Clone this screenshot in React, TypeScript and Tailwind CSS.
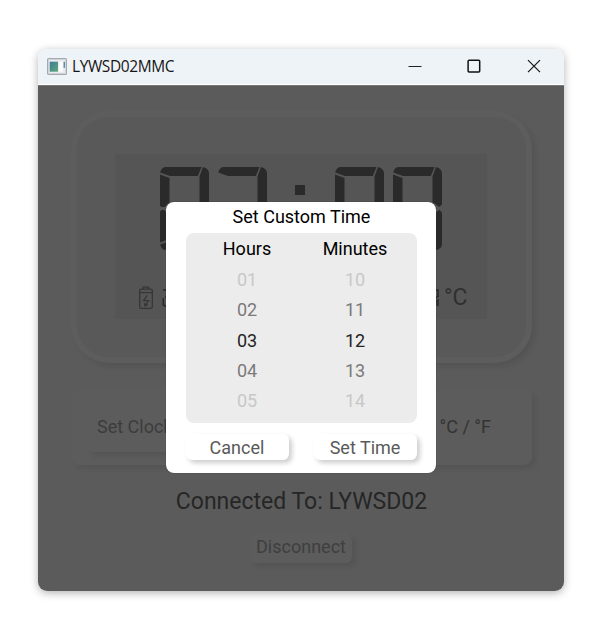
type Segment = 'top' | 'upperLeft' | 'upperRight' | 'lowerLeft' | 'lowerRight' | 'middle' | 'bottom';

const SEGMENTS: Record<Segment, string> = {
  top: 'M0.2 5.6 Q1.5 0 6 0 H41.5 L37.8 9 H10Z',
  upperLeft: 'M0 7.6 L9.5 11 V35 L4.5 40 H1.5 L0 38.5Z',
  upperRight: 'M43 0 Q49 1.5 49 6.5 V37.5 L46.3 40 L39.5 35 V9.5Z',
  middle: 'M5 41.5 L11 37 H38 L44 41.5 L38 46 H11Z',
  lowerLeft: 'M1.5 43 H4 L9.5 48 V72 L0 75.5 V44.5Z',
  lowerRight: 'M46.3 42.8 L49 45.5 V77 Q49 82 43 83 L39.5 74 V48Z',
  bottom: 'M0.2 77.4 L10 74 H37.8 L41.5 83 H6 Q1.5 83 0.2 77.4Z',
};

const ZERO: Segment[] = ['top', 'upperLeft', 'upperRight', 'lowerLeft', 'lowerRight', 'bottom'];
const SEVEN: Segment[] = ['top', 'upperRight', 'lowerRight'];

function Digit({ segments }: { segments: Segment[] }) {
  return (
    <svg className="h-[83px] w-[49px] shrink-0" viewBox="0 0 49 83" fill="#2a2a2a">
      {segments.map((s) => (
        <path key={s} d={SEGMENTS[s]} />
      ))}
    </svg>
  );
}

function Battery() {
  return (
    <svg className="h-[24px] w-[16px] shrink-0" viewBox="0 0 16 24" fill="none" stroke="#363636" strokeWidth="1.3">
      <path d="M5.2 3.2V1.2H10.6V3.2" />
      <rect x="1.7" y="3.2" width="12.6" height="19.2" rx="1.3" />
      <path d="M1.7 6.6H14.3" />
      <path d="M9.2 9.3L5.6 14.7H10.6L7.2 19.3M6.4 17L7 19.8L9.8 18.7" />
    </svg>
  );
}

function AppIcon() {
  return (
    <svg className="h-[17px] w-5 shrink-0" viewBox="0 0 20 17">
      <defs>
        <linearGradient id="pane" x1="0" y1="0" x2="1" y2="1">
          <stop offset="0" stopColor="#3f789a" />
          <stop offset="1" stopColor="#5bab78" />
        </linearGradient>
      </defs>
      <rect x="0.6" y="0.6" width="18.8" height="15.8" rx="1" fill="#e9ebee" stroke="#a4a9b0" strokeWidth="1.2" />
      <rect x="1.6" y="1.6" width="16.8" height="13.8" fill="none" stroke="#ced2d7" strokeWidth="0.7" />
      <rect x="2.7" y="3.7" width="8.3" height="10" fill="url(#pane)" />
      <rect x="12" y="3.7" width="4" height="10" fill="#fafafa" />
      <rect x="16.6" y="3.8" width="1.3" height="6" fill="#4384a4" />
    </svg>
  );
}

function TitleBar() {
  return (
    <header className="flex h-9 shrink-0 items-center border-b border-white bg-[#eef3f8] pb-px pl-[9px]">
      <AppIcon />
      <span className="ml-[5px] font-['Open_Sans',sans-serif] text-[15.5px] leading-5 tracking-[-0.4px] text-[#161616]">
        LYWSD02MMC
      </span>
      <div className="ml-auto flex items-center">
        <svg className="mr-[45px] h-[14px] w-[14px]" viewBox="0 0 14 14" stroke="#222" strokeWidth="1">
          <path d="M0.5 7.5H13.5" />
        </svg>
        <svg className="mr-[46px] h-[14px] w-[14px]" viewBox="0 0 14 14" fill="none" stroke="#111" strokeWidth="1.5">
          <rect x="1.1" y="1.3" width="11.6" height="11.6" rx="1" />
        </svg>
        <svg className="mr-[23px] h-[14px] w-[14px]" viewBox="0 0 14 14" stroke="#151515" strokeWidth="1.2">
          <path d="M1 1.2L13 13.2M13 1.2L1 13.2" />
        </svg>
      </div>
    </header>
  );
}

function Clock() {
  return (
    <section className="h-[252px] w-[461px] shrink-0 rounded-[38px] border-[6px] border-[#5d5d5d] bg-[#595959] pl-[38px] pt-[37px] shadow-[4px_4px_5px_rgba(0,0,0,0.08)]">
      <div className="h-[165px] w-[372px] bg-[#555] pt-[13px]">
        <div className="flex pl-[45px]">
          <Digit segments={ZERO} />
          <div className="ml-[9px]">
            <Digit segments={SEVEN} />
          </div>
          <div className="ml-7 mr-[30px] flex w-[10px] flex-col gap-[27px] pt-[18px]">
            <span className="h-[10px] bg-[#2a2a2a]" />
            <span className="h-[10px] bg-[#2a2a2a]" />
          </div>
          <Digit segments={ZERO} />
          <div className="ml-[9px]">
            <Digit segments={ZERO} />
          </div>
        </div>
        <div className="mt-[35px] flex h-[26px] items-center pl-[23px] text-[#303030]">
          <Battery />
          <svg className="ml-2 h-[20px] w-[12px]" viewBox="0 0 12 20" fill="none" stroke="#292929" strokeWidth="1.5">
            <path d="M1 2H10V8M3 9H10M1.3 10V17L3 18H9" />
          </svg>
          <svg className="ml-[254px] h-[20px] w-[11px]" viewBox="0 0 11 20" fill="none" stroke="#292929" strokeWidth="1.5">
            <path d="M1 2H10V9M1 10H8L10 8M10 11V18M1 17H8V12" />
          </svg>
          <span className="ml-[5px] text-[23px] leading-[26px]">°C</span>
        </div>
      </div>
    </section>
  );
}

function Column({ title, values, className }: { title: string; values: string[]; className: string }) {
  const tones = ['text-[#c8c8c8]', 'text-[#7a7a7a]', 'text-[#242424]', 'text-[#7a7a7a]', 'text-[#c8c8c8]'];
  return (
    <div className={`flex flex-col text-center ${className}`}>
      <div className="h-[31px] leading-[31px] text-black">{title}</div>
      {values.map((v, i) => (
        <div key={v} className={`h-[30.3px] leading-[31px] ${tones[i]}`}>
          {v}
        </div>
      ))}
    </div>
  );
}

function TimeDialog() {
  const button =
    'h-[26px] w-[103px] rounded-[6px] bg-white text-center leading-[27px] text-[#5a5a5a] shadow-[3px_3px_5px_rgba(0,0,0,0.2)]';
  return (
    <div
      role="dialog"
      className="absolute left-32 top-[116px] h-[271px] w-[270px] rounded-lg bg-white px-[19.5px] text-[18px] shadow-[0_0_1px_#222]"
    >
      <h2 className="h-[31px] pl-px text-center leading-[30px] text-black">Set Custom Time</h2>
      <div className="flex h-[190px] rounded-lg bg-[#ececec]">
        <Column title="Hours" values={['01', '02', '03', '04', '05']} className="w-[123px]" />
        <Column title="Minutes" values={['10', '11', '12', '13', '14']} className="w-[93px]" />
      </div>
      <div className="mt-[11px] flex justify-between">
        <button className={button}>Cancel</button>
        <button className={button}>Set Time</button>
      </div>
    </div>
  );
}

export default function App() {
  return (
    <div className="h-[640px] w-[600px] bg-white pl-[38px] pt-[49px] font-[Roboto,sans-serif]">
      <main className="flex h-[542px] w-[526px] flex-col overflow-hidden rounded-[9px] shadow-[0_2px_8px_rgba(0,0,0,0.3)]">
        <TitleBar />
        <div className="relative flex grow flex-col border-t border-[#777] bg-[#5b5b5b] pl-[33px] pt-[25px]">
          <Clock />
          <section className="mt-[26px] flex h-[76px] w-[461px] shrink-0 items-center justify-between rounded-lg bg-[#5c5c5c] pl-4 pr-[41px] text-[18px] shadow-[4px_4px_5px_rgba(0,0,0,0.07)]">
            <button className="h-[50px] w-[103px] whitespace-nowrap rounded-md bg-[#5c5c5c] pl-[10px] text-left leading-[50px] text-[#3c3c3c] shadow-[4px_4px_5px_rgba(0,0,0,0.08)]">
              Set Clock
            </button>
            <span className="pb-0.5 text-[#333]">°C / °F</span>
          </section>
          <p className="mt-[22px] w-[461px] text-center text-[23px] leading-[30px] text-[#262626]">Connected To: LYWSD02</p>
          <button className="ml-[179px] mt-[16px] h-[30px] w-[102px] rounded-md bg-[#5c5c5c] pb-0.5 text-center text-[18px] leading-[28px] text-[#3f3f3f] shadow-[4px_4px_5px_rgba(0,0,0,0.08)]">
            Disconnect
          </button>
          <TimeDialog />
        </div>
      </main>
    </div>
  );
}
